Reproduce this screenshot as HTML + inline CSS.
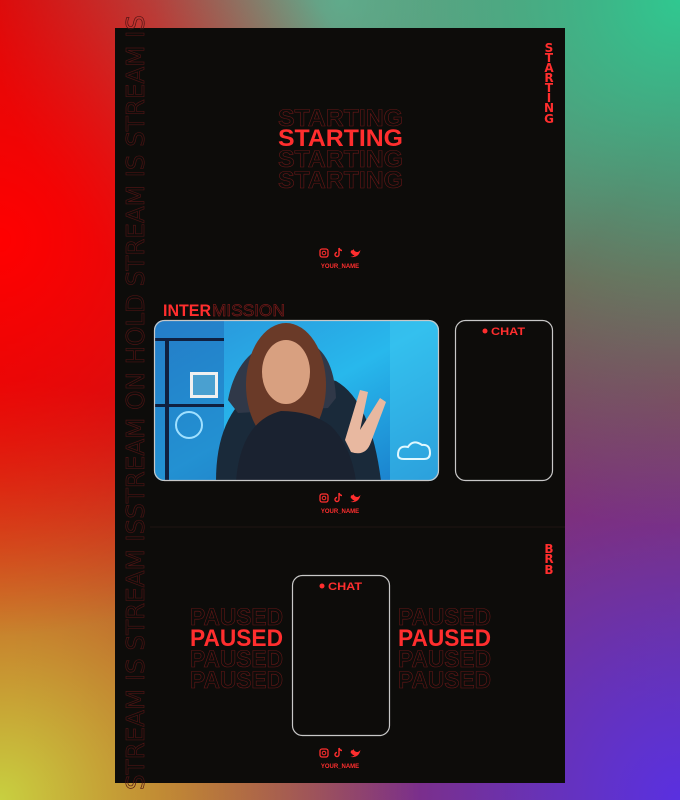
<!DOCTYPE html>
<html><head><meta charset="utf-8"><style>
html,body{margin:0;padding:0}
body{width:680px;height:800px;overflow:hidden;position:relative;
background:
radial-gradient(circle at 0% 30%, #ff0000 0%, rgba(255,0,0,0) 45%),
radial-gradient(circle at 100% 0%, #30c890 0%, rgba(48,200,144,0) 50%),
radial-gradient(circle at 50% 0%, #7a9a88 0%, rgba(122,160,144,0) 40%),
radial-gradient(circle at 0% 100%, #c8d040 0%, rgba(200,208,64,0) 40%),
radial-gradient(circle at 100% 100%, #5a30e0 0%, rgba(90,48,224,0) 50%),
radial-gradient(circle at 100% 50%, #a02828 0%, rgba(160,40,40,0) 40%),
linear-gradient(90deg,#c81010,#804050);
font-family:"Liberation Sans",sans-serif}
svg{position:absolute;left:0;top:0}
</style></head><body>
<svg width="680" height="800" viewBox="0 0 680 800" xmlns="http://www.w3.org/2000/svg">
<defs>
<linearGradient id="cam" x1="0" y1="0" x2="1" y2="1">
<stop offset="0" stop-color="#2a90d8"/><stop offset="0.5" stop-color="#28b8ec"/><stop offset="1" stop-color="#1878c8"/>
</linearGradient>
<clipPath id="cc"><rect x="154" y="320" width="285" height="161" rx="10"/></clipPath>
</defs>
<rect x="115" y="28" width="450" height="755" fill="#0d0c0a"/>
<line x1="150" y1="527" x2="565" y2="527" stroke="#1e1412" stroke-width="1"/>
<!-- left vertical text -->
<text transform="translate(144,790) rotate(-90)" font-family="DejaVu Sans" font-size="25" fill="none" stroke="#4e1414" stroke-width="0.7" textLength="775" lengthAdjust="spacingAndGlyphs">STREAM IS STREAM ISSTREAM ON HOLD STREAM IS STREAM IS</text>
<!-- starting -->
<g font-weight="bold" font-size="24">
<text x="278" y="126" fill="none" stroke="#6a1818" stroke-width="0.6" textLength="125" lengthAdjust="spacingAndGlyphs">STARTING</text>
<text x="278" y="146" fill="#ff2e2e" textLength="125" lengthAdjust="spacingAndGlyphs">STARTING</text>
<text x="278" y="167" fill="none" stroke="#6a1818" stroke-width="0.6" textLength="125" lengthAdjust="spacingAndGlyphs">STARTING</text>
<text x="278" y="188" fill="none" stroke="#6a1818" stroke-width="0.6" textLength="125" lengthAdjust="spacingAndGlyphs">STARTING</text>
<text x="190" y="625" fill="none" stroke="#6a1818" stroke-width="0.6" textLength="93" lengthAdjust="spacingAndGlyphs">PAUSED</text>
<text x="190" y="646" fill="#ff2e2e" textLength="93" lengthAdjust="spacingAndGlyphs">PAUSED</text>
<text x="190" y="667" fill="none" stroke="#6a1818" stroke-width="0.6" textLength="93" lengthAdjust="spacingAndGlyphs">PAUSED</text>
<text x="190" y="688" fill="none" stroke="#6a1818" stroke-width="0.6" textLength="93" lengthAdjust="spacingAndGlyphs">PAUSED</text>
<text x="398" y="625" fill="none" stroke="#6a1818" stroke-width="0.6" textLength="93" lengthAdjust="spacingAndGlyphs">PAUSED</text>
<text x="398" y="646" fill="#ff2e2e" textLength="93" lengthAdjust="spacingAndGlyphs">PAUSED</text>
<text x="398" y="667" fill="none" stroke="#6a1818" stroke-width="0.6" textLength="93" lengthAdjust="spacingAndGlyphs">PAUSED</text>
<text x="398" y="688" fill="none" stroke="#6a1818" stroke-width="0.6" textLength="93" lengthAdjust="spacingAndGlyphs">PAUSED</text>
</g>
<!-- right vertical -->
<g font-size="12" font-weight="bold" fill="#ff2e2e" text-anchor="middle" font-family="DejaVu Sans">
<text x="549" y="52">S</text><text x="549" y="62">T</text><text x="549" y="72">A</text><text x="549" y="82">R</text><text x="549" y="92">T</text><text x="549" y="102">I</text><text x="549" y="112">N</text><text x="549" y="123">G</text>
<text x="549" y="553">B</text><text x="549" y="563">R</text><text x="549" y="574">B</text>
</g>
<!-- intermission -->
<text x="163" y="316" font-size="17" font-weight="bold" fill="#ff2e2e" textLength="48" lengthAdjust="spacingAndGlyphs">INTER</text>
<text x="212" y="316" font-size="17" fill="none" stroke="#7a1a1a" stroke-width="0.7" textLength="73" lengthAdjust="spacingAndGlyphs">MISSION</text>
<!-- webcam -->
<g clip-path="url(#cc)">
<rect x="154" y="320" width="285" height="161" fill="url(#cam)"/>
<rect x="154" y="320" width="70" height="161" fill="#1e6ab8" opacity="0.5"/>
<rect x="165" y="340" width="4" height="141" fill="#102040"/>
<rect x="154" y="338" width="70" height="3" fill="#102040"/>
<rect x="154" y="404" width="70" height="3" fill="#102040"/>
<rect x="190" y="372" width="28" height="26" fill="#f0f0f0"/><rect x="193" y="375" width="22" height="20" fill="#4aa0d0"/>
<circle cx="189" cy="425" r="13" fill="none" stroke="#a0e0ff" stroke-width="2"/>
<rect x="390" y="320" width="49" height="161" fill="#40c8f0" opacity="0.5"/>
<path d="M398 455 q0-10 10-8 q5-8 14-2 q8-1 8 8 q0 6-6 6 h-20 q-6 0-6-4z" fill="none" stroke="#e0f8ff" stroke-width="2"/>
<path d="M216 481 q0-70 45-95 q40-15 75-5 q35 20 45 100z" fill="#1a2a3a"/>
<path d="M228 400 q10-55 60-62 q45 0 48 60 l-8 10 l-90 5z" fill="#303848"/>
<ellipse cx="286" cy="385" rx="40" ry="62" fill="#6a3a28"/>
<ellipse cx="286" cy="372" rx="24" ry="32" fill="#d8a080"/>
<path d="M236 481 q5-60 45-70 q30 0 50 15 q20 20 25 55z" fill="#1a2230"/>
<path d="M345 440 l15-50 l8 2 l-8 38 l20-32 l6 4 l-15 40 q-5 15-20 10z" fill="#e8b8a0"/>
</g>
<rect x="154.5" y="320.5" width="284" height="160" rx="10" fill="none" stroke="#c8c8c8" stroke-width="1.2"/>
<!-- chat boxes -->
<rect x="455.5" y="320.5" width="97" height="160" rx="10" fill="none" stroke="#c8c8c8" stroke-width="1.2"/>
<circle cx="485" cy="331" r="2.5" fill="#ff2e2e"/>
<text x="491" y="335" font-size="11" font-weight="bold" fill="#ff2e2e" textLength="34" lengthAdjust="spacingAndGlyphs">CHAT</text>
<rect x="292.5" y="575.5" width="97" height="160" rx="10" fill="none" stroke="#c8c8c8" stroke-width="1.2"/>
<circle cx="322" cy="586" r="2.5" fill="#ff2e2e"/>
<text x="328" y="590" font-size="11" font-weight="bold" fill="#ff2e2e" textLength="34" lengthAdjust="spacingAndGlyphs">CHAT</text>
<!-- socials -->
<g fill="#ff2e2e">
<g>
<rect x="320" y="249" width="8" height="8" rx="2" fill="none" stroke="#ff2e2e" stroke-width="1.3"/>
<circle cx="324" cy="253" r="1.8" fill="none" stroke="#ff2e2e" stroke-width="1"/>
<path d="M339 248 v6.5 a2 2 0 1 1 -2 -2 M339 248 q1 2.5 3 2.5" fill="none" stroke="#ff2e2e" stroke-width="1.4"/>
<path d="M351 250.5 q2 0 2.5-1.5 q1 3 4 3 q2-0.5 3-2 q-1 4-3 5.5 q-3 2.5-7 1.2 q2.5 0 4-1.5 q-2 0-2.5-1.5 q-2-0.5-1-3z" />
<text x="340" y="268" font-size="6" font-weight="bold" text-anchor="middle">YOUR_NAME</text>
</g>
<g transform="translate(0,245)">
<rect x="320" y="249" width="8" height="8" rx="2" fill="none" stroke="#ff2e2e" stroke-width="1.3"/>
<circle cx="324" cy="253" r="1.8" fill="none" stroke="#ff2e2e" stroke-width="1"/>
<path d="M339 248 v6.5 a2 2 0 1 1 -2 -2 M339 248 q1 2.5 3 2.5" fill="none" stroke="#ff2e2e" stroke-width="1.4"/>
<path d="M351 250.5 q2 0 2.5-1.5 q1 3 4 3 q2-0.5 3-2 q-1 4-3 5.5 q-3 2.5-7 1.2 q2.5 0 4-1.5 q-2 0-2.5-1.5 q-2-0.5-1-3z" />
<text x="340" y="268" font-size="6" font-weight="bold" text-anchor="middle">YOUR_NAME</text>
</g>
<g transform="translate(0,500)">
<rect x="320" y="249" width="8" height="8" rx="2" fill="none" stroke="#ff2e2e" stroke-width="1.3"/>
<circle cx="324" cy="253" r="1.8" fill="none" stroke="#ff2e2e" stroke-width="1"/>
<path d="M339 248 v6.5 a2 2 0 1 1 -2 -2 M339 248 q1 2.5 3 2.5" fill="none" stroke="#ff2e2e" stroke-width="1.4"/>
<path d="M351 250.5 q2 0 2.5-1.5 q1 3 4 3 q2-0.5 3-2 q-1 4-3 5.5 q-3 2.5-7 1.2 q2.5 0 4-1.5 q-2 0-2.5-1.5 q-2-0.5-1-3z" />
<text x="340" y="268" font-size="6" font-weight="bold" text-anchor="middle">YOUR_NAME</text>
</g>
</g>
</svg>
</body></html>
